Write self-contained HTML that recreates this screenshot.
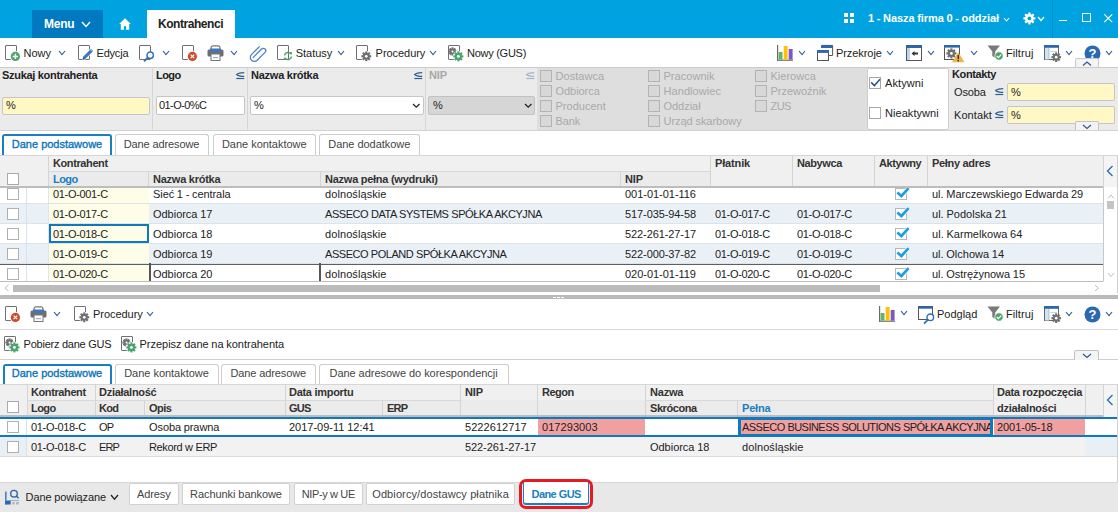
<!DOCTYPE html><html><head><meta charset="utf-8"><style>
html,body{margin:0;padding:0;width:1118px;height:512px;overflow:hidden;background:#fff;position:relative}
body{font-family:"Liberation Sans",sans-serif;font-size:11px;color:#222}
.t{position:absolute;white-space:nowrap;line-height:14px}
svg{overflow:visible;position:absolute}
</style></head><body>
<div style="position:absolute;left:0px;top:0px;width:1118px;height:38px;background:#00a3e0"></div>
<div style="position:absolute;left:32px;top:10px;width:71px;height:28px;background:#0079c1"></div>
<div class="t" style="left:44px;top:16.84px;font-size:12px;color:#fff;font-weight:bold;;letter-spacing:-0.223px;word-spacing:0.000px">Menu</div>
<svg style="position:absolute;left:81px;top:21.0px" width="10" height="6.5" viewBox="0 0 10 6.5"><polyline points="1,1 5.0,5.5 9,1" fill="none" stroke="#fff" stroke-width="1.4"/></svg>
<svg style="position:absolute;left:119px;top:18px" width="12" height="12" viewBox="0 0 12 12"><path d="M6 0.3 L11.8 6 L10.2 6 L10.2 11.8 L1.8 11.8 L1.8 6 L0.2 6 Z" fill="#fff"/><rect x="4.9" y="8.2" width="2.2" height="3.6" fill="#00a3e0"/></svg>
<div style="position:absolute;left:147px;top:10px;width:88px;height:28px;background:#fff"></div>
<div class="t" style="left:158px;top:16.84px;font-size:12px;color:#222;font-weight:bold;;letter-spacing:-0.452px;word-spacing:0.000px">Kontrahenci</div>
<svg style="position:absolute;left:844px;top:13px" width="10" height="10" viewBox="0 0 10 10"><rect x="0" y="0" width="4" height="4" fill="#fff"/><rect x="6" y="0" width="4" height="4" fill="#fff"/><rect x="0" y="6" width="4" height="4" fill="#fff"/><rect x="6" y="6" width="4" height="4" fill="#fff"/></svg>
<div class="t" style="left:868px;top:11.19px;font-size:11px;color:#fff;font-weight:bold;;letter-spacing:-0.077px;word-spacing:-0.251px">1 - Nasza firma 0 - oddział</div>
<svg style="position:absolute;left:1003px;top:16.5px" width="7" height="5" viewBox="0 0 7 5"><polyline points="1,1 3.5,4 6,1" fill="none" stroke="#fff" stroke-width="1.1"/></svg>
<svg style="position:absolute;left:1021.5999999999999px;top:10.6px" width="14.8" height="14.8" viewBox="0 0 14.8 14.8"><g transform="translate(7.4,7.4)"><rect x="-1.1" y="-6.0" width="2.2" height="12.0" transform="rotate(0)" fill="#fff"/><rect x="-1.1" y="-6.0" width="2.2" height="12.0" transform="rotate(45)" fill="#fff"/><rect x="-1.1" y="-6.0" width="2.2" height="12.0" transform="rotate(90)" fill="#fff"/><rect x="-1.1" y="-6.0" width="2.2" height="12.0" transform="rotate(135)" fill="#fff"/><circle r="4.4" fill="#fff"/><circle r="1.848" fill="#00a3e0"/></g></svg>
<svg style="position:absolute;left:1037px;top:15.5px" width="8" height="5.5" viewBox="0 0 8 5.5"><polyline points="1,1 4.0,4.5 7,1" fill="none" stroke="#fff" stroke-width="1.2"/></svg>
<div style="position:absolute;left:1052px;top:0px;width:1px;height:38px;background:#0a8cc4"></div>
<div style="position:absolute;left:1059px;top:19.6px;width:8px;height:1.4px;background:#fff"></div>
<div style="position:absolute;left:1082px;top:13px;width:8.5px;height:8.5px;box-sizing:border-box;border:1.2px solid #fff"></div>
<svg style="position:absolute;left:1104px;top:14px" width="9" height="9" viewBox="0 0 9 9"><path d="M0.3 0.3 L8.2 8.2 M8.2 0.3 L0.3 8.2" stroke="#fff" stroke-width="1.1"/></svg>
<div style="position:absolute;left:0px;top:67px;width:1118px;height:1px;background:#cbcbcb"></div>
<svg style="position:absolute;left:5px;top:45px" width="13" height="15" viewBox="0 0 13 15"><rect x="0.5" y="0.5" width="11" height="14" rx="0.5" fill="none" stroke="#707070" stroke-width="1"/></svg>
<svg style="position:absolute;left:8.900000000000002px;top:50.2px" width="12.799999999999999" height="12.799999999999999" viewBox="0 0 12.799999999999999 12.799999999999999"><circle cx="6.3999999999999995" cy="6.3999999999999995" r="5.5" fill="#fff"/><circle cx="6.3999999999999995" cy="6.3999999999999995" r="4.6" fill="#4aa36c"/><path d="M6.3999999999999995 3.6999999999999993 V9.1 M3.6999999999999993 6.3999999999999995 H9.1" stroke="#fff" stroke-width="1.5"/></svg>
<div class="t" style="left:23.5px;top:45.69px;font-size:11px;color:#222;font-weight:normal;;letter-spacing:0.023px;word-spacing:0.000px">Nowy</div>
<svg style="position:absolute;left:58px;top:50.0px" width="8" height="5.5" viewBox="0 0 8 5.5"><polyline points="1,1 4.0,4.5 7,1" fill="none" stroke="#2e5f91" stroke-width="1.15"/></svg>
<svg style="position:absolute;left:78px;top:45px" width="13" height="15" viewBox="0 0 13 15"><rect x="0.5" y="0.5" width="11" height="14" rx="0.5" fill="none" stroke="#707070" stroke-width="1"/></svg>
<svg style="position:absolute;left:81px;top:47px" width="13" height="14" viewBox="0 0 13 14"><path d="M1.5 12.8 L2.3 9.6 L10 1.9 L12.2 4.1 L4.5 11.8 Z" fill="#3b78c2" stroke="#fff" stroke-width="1.2" stroke-linejoin="round"/><path d="M1.5 12.8 L2.3 9.6 L10 1.9 L12.2 4.1 L4.5 11.8 Z" fill="#3b78c2"/><path d="M1.5 12.8 L2.1 10.5 L3.7 12.1 Z" fill="#24507f"/><path d="M10 1.9 L12.2 4.1 L11.4 4.9 L9.2 2.7 Z" fill="#9cc0ea"/></svg>
<div class="t" style="left:96.5px;top:45.69px;font-size:11px;color:#222;font-weight:normal;;letter-spacing:-0.195px;word-spacing:0.000px">Edycja</div>
<svg style="position:absolute;left:139px;top:45px" width="13" height="15" viewBox="0 0 13 15"><rect x="0.5" y="0.5" width="11" height="14" rx="0.5" fill="none" stroke="#707070" stroke-width="1"/></svg>
<svg style="position:absolute;left:142.60000000000002px;top:51.099999999999994px" width="12.4" height="12.4" viewBox="0 0 12.4 12.4"><circle cx="7.2" cy="4.2" r="3.2" fill="#fff" stroke="#2f6fba" stroke-width="1.4"/><line x1="4.960000000000001" y1="6.4399999999999995" x2="1" y2="10.4" stroke="#2f6fba" stroke-width="1.8"/></svg>
<svg style="position:absolute;left:161.5px;top:49.7px" width="8" height="5.5" viewBox="0 0 8 5.5"><polyline points="1,1 4.0,4.5 7,1" fill="none" stroke="#2e5f91" stroke-width="1.15"/></svg>
<svg style="position:absolute;left:182px;top:45px" width="13" height="15" viewBox="0 0 13 15"><rect x="0.5" y="0.5" width="11" height="14" rx="0.5" fill="none" stroke="#707070" stroke-width="1"/></svg>
<svg style="position:absolute;left:186.0px;top:50.0px" width="12.799999999999999" height="12.799999999999999" viewBox="0 0 12.799999999999999 12.799999999999999"><circle cx="6.3999999999999995" cy="6.3999999999999995" r="5.5" fill="#fff"/><circle cx="6.3999999999999995" cy="6.3999999999999995" r="4.6" fill="#d04a2a"/><path d="M4.6 4.6 L8.2 8.2 M8.2 4.6 L4.6 8.2" stroke="#fff" stroke-width="1.2"/></svg>
<svg style="position:absolute;left:207px;top:45px" width="17" height="16" viewBox="0 0 17 16"><rect x="4" y="0.8" width="9" height="5" rx="2" fill="none" stroke="#777" stroke-width="1.2"/><rect x="0.5" y="4.5" width="16" height="7" rx="1.5" fill="#6e6e6e"/><rect x="3" y="3.5" width="11" height="3.2" fill="#3b78c2"/><rect x="4" y="9" width="9" height="6.5" fill="#fff" stroke="#777" stroke-width="1"/><rect x="6" y="12" width="5" height="1.2" fill="#8fb0d8"/></svg>
<svg style="position:absolute;left:230px;top:50.0px" width="8" height="5.5" viewBox="0 0 8 5.5"><polyline points="1,1 4.0,4.5 7,1" fill="none" stroke="#2e5f91" stroke-width="1.15"/></svg>
<svg style="position:absolute;left:250px;top:45px" width="17" height="17" viewBox="0 0 17 17"><path d="M3.2 13.2 L11.8 4.6 A2.4 2.4 0 0 1 15.2 8 L7.4 15.8 A4 4 0 0 1 1.6 10.2 L9.6 2.2" fill="none" stroke="#4a86c8" stroke-width="1.3" stroke-linecap="round" transform="translate(-0.2,-0.6)"/></svg>
<svg style="position:absolute;left:277px;top:45px" width="13" height="15" viewBox="0 0 13 15"><rect x="0.5" y="0.5" width="11" height="14" rx="0.5" fill="none" stroke="#707070" stroke-width="1"/></svg>
<svg style="position:absolute;left:283.2px;top:50.8px" width="10" height="10" viewBox="0 0 10 10"><path d="M1.5 4.5 A3.6 3.6 0 0 1 8 3" fill="none" stroke="#4aa36c" stroke-width="1.5"/><path d="M8.5 5.5 A3.6 3.6 0 0 1 2 7" fill="none" stroke="#4aa36c" stroke-width="1.5"/><path d="M6.5 1 L9.2 1.2 L8.6 4 Z" fill="#4aa36c"/><path d="M3.5 9 L0.8 8.8 L1.4 6 Z" fill="#4aa36c"/></svg>
<div class="t" style="left:295.7px;top:45.69px;font-size:11px;color:#222;font-weight:normal;;letter-spacing:-0.011px;word-spacing:0.000px">Statusy</div>
<svg style="position:absolute;left:337px;top:50.0px" width="8" height="5.5" viewBox="0 0 8 5.5"><polyline points="1,1 4.0,4.5 7,1" fill="none" stroke="#2e5f91" stroke-width="1.15"/></svg>
<svg style="position:absolute;left:356px;top:45px" width="13" height="15" viewBox="0 0 13 15"><rect x="0.5" y="0.5" width="11" height="14" rx="0.5" fill="none" stroke="#707070" stroke-width="1"/></svg>
<svg style="position:absolute;left:360.2px;top:50.2px" width="12.6" height="12.6" viewBox="0 0 12.6 12.6"><g transform="translate(6.3,6.3)"><circle r="5.5" fill="#fff"/><rect x="-1.1" y="-4.9" width="2.2" height="9.8" transform="rotate(0)" fill="#6f6f6f"/><rect x="-1.1" y="-4.9" width="2.2" height="9.8" transform="rotate(45)" fill="#6f6f6f"/><rect x="-1.1" y="-4.9" width="2.2" height="9.8" transform="rotate(90)" fill="#6f6f6f"/><rect x="-1.1" y="-4.9" width="2.2" height="9.8" transform="rotate(135)" fill="#6f6f6f"/><circle r="3.3" fill="#6f6f6f"/><circle r="1.386" fill="#fff"/></g></svg>
<div class="t" style="left:375.6px;top:45.99px;font-size:11px;color:#222;font-weight:normal;;letter-spacing:-0.047px;word-spacing:0.000px">Procedury</div>
<svg style="position:absolute;left:429.3px;top:50.0px" width="8" height="5.5" viewBox="0 0 8 5.5"><polyline points="1,1 4.0,4.5 7,1" fill="none" stroke="#2e5f91" stroke-width="1.15"/></svg>
<svg style="position:absolute;left:448px;top:45px" width="13" height="15" viewBox="0 0 13 15"><rect x="0.5" y="0.5" width="11" height="14" rx="0.5" fill="none" stroke="#707070" stroke-width="1"/></svg>
<svg style="position:absolute;left:447.0px;top:45.7px" width="11.0" height="11.0" viewBox="0 0 11.0 11.0"><g transform="translate(5.5,5.5)"><rect x="-1.1" y="-4.1" width="2.2" height="8.2" transform="rotate(0)" fill="#6f6f6f"/><rect x="-1.1" y="-4.1" width="2.2" height="8.2" transform="rotate(45)" fill="#6f6f6f"/><rect x="-1.1" y="-4.1" width="2.2" height="8.2" transform="rotate(90)" fill="#6f6f6f"/><rect x="-1.1" y="-4.1" width="2.2" height="8.2" transform="rotate(135)" fill="#6f6f6f"/><circle r="2.5" fill="#6f6f6f"/><circle r="1.05" fill="#fff"/></g></svg>
<svg style="position:absolute;left:451.90000000000003px;top:49.7px" width="12.8" height="12.8" viewBox="0 0 12.8 12.8"><g transform="translate(6.4,6.4)"><circle r="5.6" fill="#fff"/><rect x="-1.1" y="-5.0" width="2.2" height="10.0" transform="rotate(0)" fill="#4aa36c"/><rect x="-1.1" y="-5.0" width="2.2" height="10.0" transform="rotate(45)" fill="#4aa36c"/><rect x="-1.1" y="-5.0" width="2.2" height="10.0" transform="rotate(90)" fill="#4aa36c"/><rect x="-1.1" y="-5.0" width="2.2" height="10.0" transform="rotate(135)" fill="#4aa36c"/><circle r="3.4" fill="#4aa36c"/><circle r="1.428" fill="#fff"/></g></svg>
<div class="t" style="left:467px;top:45.69px;font-size:11px;color:#222;font-weight:normal;;letter-spacing:-0.255px;word-spacing:-0.073px">Nowy (GUS)</div>
<svg style="position:absolute;left:777px;top:45px" width="17" height="16" viewBox="0 0 17 16"><rect x="0" y="0" width="1.2" height="15.6" fill="#6b6b6b"/><rect x="0" y="14.6" width="16" height="1.2" fill="#6b6b6b"/><rect x="1.6" y="7" width="3.9" height="7.6" fill="#62b36b"/><rect x="6.7" y="1" width="3.9" height="13.6" fill="#ffc107"/><rect x="11.7" y="4" width="3.9" height="10.6" fill="#7b57c4"/></svg>
<svg style="position:absolute;left:797.5px;top:50.0px" width="8" height="5.5" viewBox="0 0 8 5.5"><polyline points="1,1 4.0,4.5 7,1" fill="none" stroke="#2e5f91" stroke-width="1.15"/></svg>
<svg style="position:absolute;left:817px;top:45px" width="17" height="17" viewBox="0 0 17 17"><path d="M4.6 2.6 V0.4 H15.6 V10.5 H11.6" fill="none" stroke="#555" stroke-width="1"/><rect x="4.1" y="0.2" width="11.5" height="2.8" fill="#2a68b0"/><rect x="0.5" y="5.5" width="11" height="10" fill="#fff" stroke="#555" stroke-width="1"/><rect x="0" y="5" width="12" height="2.9" fill="#2a68b0"/></svg>
<div class="t" style="left:836px;top:45.69px;font-size:11px;color:#222;font-weight:normal;;letter-spacing:-0.073px;word-spacing:0.000px">Przekroje</div>
<svg style="position:absolute;left:886px;top:50.0px" width="8" height="5.5" viewBox="0 0 8 5.5"><polyline points="1,1 4.0,4.5 7,1" fill="none" stroke="#2e5f91" stroke-width="1.15"/></svg>
<svg style="position:absolute;left:906px;top:45px" width="16" height="16" viewBox="0 0 16 16"><rect x="0.5" y="0.5" width="15" height="15" fill="#fff" stroke="#555" stroke-width="1"/><rect x="0.5" y="0.5" width="15" height="2.5" fill="#2a68b0"/><rect x="1" y="3" width="3" height="12" fill="#bcd6ee"/><path d="M5.5 8.5 L8.5 6 V7.6 H12 V9.4 H8.5 V11 Z" fill="#333"/></svg>
<svg style="position:absolute;left:926.5px;top:49.7px" width="8" height="5.5" viewBox="0 0 8 5.5"><polyline points="1,1 4.0,4.5 7,1" fill="none" stroke="#2e5f91" stroke-width="1.15"/></svg>
<svg style="position:absolute;left:944px;top:45px" width="17" height="15" viewBox="0 0 17 15"><rect x="0.5" y="0.5" width="15" height="14" fill="#fff" stroke="#555" stroke-width="1"/><rect x="0" y="0" width="16" height="2.6" fill="#2a68b0"/></svg>
<svg style="position:absolute;left:945.0px;top:47.1px" width="12.8" height="12.8" viewBox="0 0 12.8 12.8"><g transform="translate(6.4,6.4)"><rect x="-1.1" y="-5.0" width="2.2" height="10.0" transform="rotate(0)" fill="#6f6f6f"/><rect x="-1.1" y="-5.0" width="2.2" height="10.0" transform="rotate(45)" fill="#6f6f6f"/><rect x="-1.1" y="-5.0" width="2.2" height="10.0" transform="rotate(90)" fill="#6f6f6f"/><rect x="-1.1" y="-5.0" width="2.2" height="10.0" transform="rotate(135)" fill="#6f6f6f"/><circle r="3.4" fill="#6f6f6f"/><circle r="1.428" fill="#fff"/></g></svg>
<svg style="position:absolute;left:951.5px;top:52px" width="13" height="10.5" viewBox="0 0 13 10.5"><path d="M6.2 0.3 L12.6 10.2 H0 Z" fill="#f0b448"/><rect x="5.6" y="3" width="1.3" height="4.3" fill="#222"/><rect x="5.6" y="8" width="1.3" height="1.4" fill="#222"/></svg>
<svg style="position:absolute;left:969.5px;top:49.7px" width="8" height="5.5" viewBox="0 0 8 5.5"><polyline points="1,1 4.0,4.5 7,1" fill="none" stroke="#2e5f91" stroke-width="1.15"/></svg>
<svg style="position:absolute;left:987px;top:45px" width="17" height="16" viewBox="0 0 17 16"><path d="M0.5 0.5 H13 L8.2 6.5 V13 L5.3 11 V6.5 Z" fill="#7a7a7a"/><circle cx="12" cy="11" r="4.2" fill="#4aa36c" stroke="#fff" stroke-width="0.8"/><path d="M9.8 11 L11.4 12.6 L14.2 9.6" fill="none" stroke="#fff" stroke-width="1.3"/></svg>
<div class="t" style="left:1006px;top:45.69px;font-size:11px;color:#222;font-weight:normal;;letter-spacing:0.080px;word-spacing:0.000px">Filtruj</div>
<svg style="position:absolute;left:1044px;top:45px" width="15" height="15" viewBox="0 0 15 15"><rect x="0.5" y="0.5" width="14" height="14" fill="#fff" stroke="#666" stroke-width="1"/><rect x="1" y="3" width="4" height="11.5" fill="#cfe3f5"/><line x1="5" y1="3" x2="5" y2="14.5" stroke="#8aa" stroke-width="0.6"/><line x1="6.5" y1="6.5" x2="13" y2="6.5" stroke="#bbb" stroke-width="0.7"/><rect x="0" y="0" width="15" height="2.8" fill="#2a68b0"/></svg>
<svg style="position:absolute;left:1049.8px;top:50.8px" width="12.4" height="12.4" viewBox="0 0 12.4 12.4"><g transform="translate(6.2,6.2)"><rect x="-1.1" y="-4.800000000000001" width="2.2" height="9.600000000000001" transform="rotate(0)" fill="#6f6f6f"/><rect x="-1.1" y="-4.800000000000001" width="2.2" height="9.600000000000001" transform="rotate(45)" fill="#6f6f6f"/><rect x="-1.1" y="-4.800000000000001" width="2.2" height="9.600000000000001" transform="rotate(90)" fill="#6f6f6f"/><rect x="-1.1" y="-4.800000000000001" width="2.2" height="9.600000000000001" transform="rotate(135)" fill="#6f6f6f"/><circle r="3.2" fill="#6f6f6f"/><circle r="1.344" fill="#fff"/></g></svg>
<svg style="position:absolute;left:1064.5px;top:50.0px" width="8" height="5.5" viewBox="0 0 8 5.5"><polyline points="1,1 4.0,4.5 7,1" fill="none" stroke="#2e5f91" stroke-width="1.15"/></svg>
<svg style="position:absolute;left:1083.7px;top:44.6px" width="17" height="17" viewBox="0 0 17 17"><circle cx="8.5" cy="8.5" r="8" fill="#2a68b0"/><text x="8.5" y="13.2" text-anchor="middle" font-family="Liberation Sans" font-weight="bold" font-size="13" fill="#fff">?</text></svg>
<svg style="position:absolute;left:1104.5px;top:50.0px" width="8" height="5.5" viewBox="0 0 8 5.5"><polyline points="1,1 4.0,4.5 7,1" fill="none" stroke="#2e5f91" stroke-width="1.15"/></svg>
<div style="position:absolute;left:0px;top:68px;width:1118px;height:62px;background:#ebebeb"></div>
<div style="position:absolute;left:0px;top:130px;width:1118px;height:1px;background:#d2d2d2"></div>
<div style="position:absolute;left:152px;top:68px;width:1px;height:62px;background:#d6d6d6"></div>
<div style="position:absolute;left:247px;top:68px;width:1px;height:62px;background:#d6d6d6"></div>
<div style="position:absolute;left:425px;top:68px;width:1px;height:62px;background:#d6d6d6"></div>
<div class="t" style="left:2px;top:68.19px;font-size:11px;color:#222;font-weight:bold;;letter-spacing:-0.301px;word-spacing:-0.027px">Szukaj kontrahenta</div>
<div style="position:absolute;left:1.5px;top:97px;width:148px;height:18px;box-sizing:border-box;border:1px solid #c6c6c6;border-radius:2px;background:#fff7c4"></div>
<div class="t" style="left:6px;top:98.19px;font-size:11px;color:#222;font-weight:normal;;letter-spacing:-1.719px;word-spacing:0.000px">%</div>
<div class="t" style="left:156px;top:68.19px;font-size:11px;color:#222;font-weight:bold;;letter-spacing:-0.559px;word-spacing:0.000px">Logo</div>
<svg style="position:absolute;left:236px;top:71.5px" width="9" height="8" viewBox="0 0 9 8"><path d="M8.2 0.6 C4 0.6 1.6 1.6 0.6 2.5 C1.6 3.4 4 4.4 8.2 4.4" fill="none" stroke="#2e5f91" stroke-width="1.1"/><line x1="0.3" y1="6.5" x2="8.3" y2="6.5" stroke="#2e5f91" stroke-width="1.2"/></svg>
<div style="position:absolute;left:155.5px;top:96px;width:89px;height:19px;box-sizing:border-box;border:1px solid #c6c6c6;border-radius:2px;background:#fff"></div>
<div class="t" style="left:159px;top:98.19px;font-size:11px;color:#222;font-weight:normal;;letter-spacing:-0.566px;word-spacing:0.000px">01-O-0%C</div>
<div class="t" style="left:251px;top:68.19px;font-size:11px;color:#222;font-weight:bold;;letter-spacing:-0.240px;word-spacing:-0.088px">Nazwa krótka</div>
<svg style="position:absolute;left:414px;top:71.5px" width="9" height="8" viewBox="0 0 9 8"><path d="M8.2 0.6 C4 0.6 1.6 1.6 0.6 2.5 C1.6 3.4 4 4.4 8.2 4.4" fill="none" stroke="#2e5f91" stroke-width="1.1"/><line x1="0.3" y1="6.5" x2="8.3" y2="6.5" stroke="#2e5f91" stroke-width="1.2"/></svg>
<div style="position:absolute;left:250px;top:96px;width:174px;height:19px;box-sizing:border-box;border:1px solid #c6c6c6;border-radius:2px;background:#fff"></div>
<div class="t" style="left:254px;top:98.19px;font-size:11px;color:#222;font-weight:normal;;letter-spacing:-1.719px;word-spacing:0.000px">%</div>
<svg style="position:absolute;left:412.3px;top:103.1px" width="8.5" height="5.2" viewBox="0 0 8.5 5.2"><polyline points="1,1 4.25,4.2 7.5,1" fill="none" stroke="#222" stroke-width="1.3"/></svg>
<div class="t" style="left:429px;top:68.19px;font-size:11px;color:#a8a8a8;font-weight:bold;;letter-spacing:-0.089px;word-spacing:0.000px">NIP</div>
<svg style="position:absolute;left:526px;top:71.5px" width="9" height="8" viewBox="0 0 9 8"><path d="M8.2 0.6 C4 0.6 1.6 1.6 0.6 2.5 C1.6 3.4 4 4.4 8.2 4.4" fill="none" stroke="#9fb6cf" stroke-width="1.1"/><line x1="0.3" y1="6.5" x2="8.3" y2="6.5" stroke="#9fb6cf" stroke-width="1.2"/></svg>
<div style="position:absolute;left:428px;top:96px;width:107px;height:19px;box-sizing:border-box;border:1px solid #c2c2c2;border-radius:2px;background:#d6d6d6"></div>
<div class="t" style="left:433px;top:98.19px;font-size:11px;color:#222;font-weight:normal;;letter-spacing:-1.719px;word-spacing:0.000px">%</div>
<svg style="position:absolute;left:523.5px;top:103.3px" width="8.5" height="5.2" viewBox="0 0 8.5 5.2"><polyline points="1,1 4.25,4.2 7.5,1" fill="none" stroke="#222" stroke-width="1.3"/></svg>
<div style="position:absolute;left:537px;top:68px;width:330px;height:62px;background:#dedede"></div>
<div style="position:absolute;left:539.8px;top:70.1px;width:12px;height:12px;box-sizing:border-box;border:1px solid #b3b3b3;background:#d8d8d8"></div>
<div class="t" style="left:555.5px;top:69.19px;font-size:11px;color:#a9a9a9;font-weight:normal;;letter-spacing:0.057px;word-spacing:0.000px">Dostawca</div>
<div style="position:absolute;left:539.8px;top:85.1px;width:12px;height:12px;box-sizing:border-box;border:1px solid #b3b3b3;background:#d8d8d8"></div>
<div class="t" style="left:555.5px;top:84.19px;font-size:11px;color:#a9a9a9;font-weight:normal;;letter-spacing:-0.049px;word-spacing:0.000px">Odbiorca</div>
<div style="position:absolute;left:539.8px;top:100.1px;width:12px;height:12px;box-sizing:border-box;border:1px solid #b3b3b3;background:#d8d8d8"></div>
<div class="t" style="left:555.5px;top:99.19px;font-size:11px;color:#a9a9a9;font-weight:normal;;letter-spacing:0.021px;word-spacing:0.000px">Producent</div>
<div style="position:absolute;left:539.8px;top:115.1px;width:12px;height:12px;box-sizing:border-box;border:1px solid #b3b3b3;background:#d8d8d8"></div>
<div class="t" style="left:555.5px;top:114.19px;font-size:11px;color:#a9a9a9;font-weight:normal;;letter-spacing:-0.148px;word-spacing:0.000px">Bank</div>
<div style="position:absolute;left:647.8px;top:70.1px;width:12px;height:12px;box-sizing:border-box;border:1px solid #b3b3b3;background:#d8d8d8"></div>
<div class="t" style="left:663.5px;top:69.19px;font-size:11px;color:#a9a9a9;font-weight:normal;;letter-spacing:0.036px;word-spacing:0.000px">Pracownik</div>
<div style="position:absolute;left:647.8px;top:85.1px;width:12px;height:12px;box-sizing:border-box;border:1px solid #b3b3b3;background:#d8d8d8"></div>
<div class="t" style="left:663.5px;top:84.19px;font-size:11px;color:#a9a9a9;font-weight:normal;;letter-spacing:0.072px;word-spacing:0.000px">Handlowiec</div>
<div style="position:absolute;left:647.8px;top:100.1px;width:12px;height:12px;box-sizing:border-box;border:1px solid #b3b3b3;background:#d8d8d8"></div>
<div class="t" style="left:663.5px;top:99.19px;font-size:11px;color:#a9a9a9;font-weight:normal;;letter-spacing:-0.038px;word-spacing:0.000px">Oddział</div>
<div style="position:absolute;left:647.8px;top:115.1px;width:12px;height:12px;box-sizing:border-box;border:1px solid #b3b3b3;background:#d8d8d8"></div>
<div class="t" style="left:663.5px;top:114.19px;font-size:11px;color:#a9a9a9;font-weight:normal;;letter-spacing:-0.031px;word-spacing:-0.297px">Urząd skarbowy</div>
<div style="position:absolute;left:754.8px;top:70.1px;width:12px;height:12px;box-sizing:border-box;border:1px solid #b3b3b3;background:#d8d8d8"></div>
<div class="t" style="left:770.5px;top:69.19px;font-size:11px;color:#a9a9a9;font-weight:normal;;letter-spacing:0.010px;word-spacing:0.000px">Kierowca</div>
<div style="position:absolute;left:754.8px;top:85.1px;width:12px;height:12px;box-sizing:border-box;border:1px solid #b3b3b3;background:#d8d8d8"></div>
<div class="t" style="left:770.5px;top:84.19px;font-size:11px;color:#a9a9a9;font-weight:normal;;letter-spacing:-0.013px;word-spacing:0.000px">Przewoźnik</div>
<div style="position:absolute;left:754.8px;top:100.1px;width:12px;height:12px;box-sizing:border-box;border:1px solid #b3b3b3;background:#d8d8d8"></div>
<div class="t" style="left:770.5px;top:99.19px;font-size:11px;color:#a9a9a9;font-weight:normal;;letter-spacing:-0.578px;word-spacing:0.000px">ZUS</div>
<div style="position:absolute;left:867px;top:68px;width:82px;height:62px;box-sizing:border-box;border:1px solid #cfcfcf;background:#fff;border-radius:2px"></div>
<div style="position:absolute;left:869px;top:77.2px;width:12px;height:12px;box-sizing:border-box;border:1px solid #a6a6a6;background:#fff"></div>
<svg style="position:absolute;left:869px;top:77px" width="12" height="12" viewBox="0 0 12 12"><polyline points="2.2,5.4 5.4,8.6 11,2.2" fill="none" stroke="#24528a" stroke-width="1.5"/></svg>
<div class="t" style="left:885px;top:75.99px;font-size:11px;color:#222;font-weight:normal;;letter-spacing:0.094px;word-spacing:0.000px">Aktywni</div>
<div style="position:absolute;left:869px;top:107px;width:12px;height:12px;box-sizing:border-box;border:1px solid #a6a6a6;background:#fff"></div>
<div class="t" style="left:885px;top:106.19px;font-size:11px;color:#222;font-weight:normal;;letter-spacing:0.053px;word-spacing:0.000px">Nieaktywni</div>
<div class="t" style="left:952px;top:67.19px;font-size:11px;color:#222;font-weight:bold;;letter-spacing:-0.387px;word-spacing:0.000px">Kontakty</div>
<div class="t" style="left:954px;top:85.19px;font-size:11px;color:#222;font-weight:normal;;letter-spacing:-0.153px;word-spacing:0.000px">Osoba</div>
<svg style="position:absolute;left:995px;top:88px" width="9" height="8" viewBox="0 0 9 8"><path d="M8.2 0.6 C4 0.6 1.6 1.6 0.6 2.5 C1.6 3.4 4 4.4 8.2 4.4" fill="none" stroke="#2e5f91" stroke-width="1.1"/><line x1="0.3" y1="6.5" x2="8.3" y2="6.5" stroke="#2e5f91" stroke-width="1.2"/></svg>
<div style="position:absolute;left:1007px;top:83px;width:108px;height:18px;box-sizing:border-box;border:1px solid #c6c6c6;border-radius:2px;background:#fff7c4"></div>
<div class="t" style="left:1011px;top:85.19px;font-size:11px;color:#222;font-weight:normal;;letter-spacing:-1.719px;word-spacing:0.000px">%</div>
<div class="t" style="left:954px;top:107.69px;font-size:11px;color:#222;font-weight:normal;;letter-spacing:0.076px;word-spacing:0.000px">Kontakt</div>
<svg style="position:absolute;left:995px;top:110.5px" width="9" height="8" viewBox="0 0 9 8"><path d="M8.2 0.6 C4 0.6 1.6 1.6 0.6 2.5 C1.6 3.4 4 4.4 8.2 4.4" fill="none" stroke="#2e5f91" stroke-width="1.1"/><line x1="0.3" y1="6.5" x2="8.3" y2="6.5" stroke="#2e5f91" stroke-width="1.2"/></svg>
<div style="position:absolute;left:1007px;top:105.5px;width:108px;height:18px;box-sizing:border-box;border:1px solid #c6c6c6;border-radius:2px;background:#fff7c4"></div>
<div class="t" style="left:1011px;top:107.69px;font-size:11px;color:#222;font-weight:normal;;letter-spacing:-1.719px;word-spacing:0.000px">%</div>
<div style="position:absolute;left:1074.5px;top:58.2px;width:24px;height:9px;box-sizing:border-box;border:1px solid #c9c9c9;border-bottom:none;background:#f4f4f4;border-radius:2px 2px 0 0"></div>
<svg style="position:absolute;left:1082px;top:60.8px" width="10" height="5" viewBox="0 0 10 5"><polyline points="1,4.5 5,1 9,4.5" fill="none" stroke="#2e5f91" stroke-width="1.3"/></svg>
<div style="position:absolute;left:1074.5px;top:121.2px;width:24px;height:9.3px;box-sizing:border-box;border:1px solid #c2c2c2;border-bottom:none;background:#f4f4f4;border-radius:2px 2px 0 0"></div>
<svg style="position:absolute;left:1081.8px;top:124px" width="10" height="5" viewBox="0 0 10 5"><polyline points="1,1 5,4.5 9,1" fill="none" stroke="#2e5f91" stroke-width="1.3"/></svg>
<div style="position:absolute;left:2px;top:134px;width:110px;height:23px;box-sizing:border-box;border:2px solid #1a7fc1;border-bottom:none;border-radius:3px 3px 0 0;background:#fff"></div>
<div class="t" style="left:2px;top:137.00px;width:110px;text-align:center;color:#0b74b9;font-size:11px;-webkit-text-stroke:0.35px #0b74b9;letter-spacing:-0.011px;text-indent:0.011px">Dane podstawowe</div>
<div style="position:absolute;left:114.5px;top:134px;width:94px;height:22px;box-sizing:border-box;border:1px solid #cdcdcd;border-bottom:none;border-radius:3px 3px 0 0;background:#fff"></div>
<div class="t" style="left:114.5px;top:137.00px;width:94px;text-align:center;color:#444;font-size:11px;letter-spacing:-0.120px;text-indent:0.120px">Dane adresowe</div>
<div style="position:absolute;left:212.5px;top:134px;width:103.5px;height:22px;box-sizing:border-box;border:1px solid #cdcdcd;border-bottom:none;border-radius:3px 3px 0 0;background:#fff"></div>
<div class="t" style="left:212.5px;top:137.00px;width:103.5px;text-align:center;color:#444;font-size:11px;letter-spacing:-0.018px;text-indent:0.018px">Dane kontaktowe</div>
<div style="position:absolute;left:319px;top:134px;width:100.5px;height:22px;box-sizing:border-box;border:1px solid #cdcdcd;border-bottom:none;border-radius:3px 3px 0 0;background:#fff"></div>
<div class="t" style="left:319px;top:137.00px;width:100.5px;text-align:center;color:#444;font-size:11px;letter-spacing:-0.040px;text-indent:0.040px">Dane dodatkowe</div>
<div style="position:absolute;left:0px;top:156px;width:1103px;height:31px;background:#f0f0f0"></div>
<div style="position:absolute;left:48px;top:171px;width:662px;height:16px;background:#ebebeb"></div>
<div style="position:absolute;left:0px;top:186px;width:1103px;height:2px;background:#bdbdbd"></div>
<div style="position:absolute;left:48px;top:156px;width:1px;height:30px;background:#d4d4d4"></div>
<div style="position:absolute;left:48px;top:171px;width:662px;height:1px;background:#d9d9d9"></div>
<div style="position:absolute;left:148px;top:171px;width:1px;height:15px;background:#d4d4d4"></div>
<div style="position:absolute;left:320px;top:171px;width:1px;height:15px;background:#d4d4d4"></div>
<div style="position:absolute;left:620px;top:171px;width:1px;height:15px;background:#d4d4d4"></div>
<div style="position:absolute;left:710px;top:156px;width:1px;height:30px;background:#d4d4d4"></div>
<div style="position:absolute;left:792px;top:156px;width:1px;height:30px;background:#d4d4d4"></div>
<div style="position:absolute;left:874px;top:156px;width:1px;height:30px;background:#d4d4d4"></div>
<div style="position:absolute;left:927px;top:156px;width:1px;height:30px;background:#d4d4d4"></div>
<div style="position:absolute;left:0px;top:155px;width:1118px;height:1px;background:#d6d6d6"></div>
<div style="position:absolute;left:1103px;top:156px;width:15px;height:31px;background:#f4f4f4;box-sizing:border-box;border-left:1px solid #d4d4d4"></div>
<svg style="position:absolute;left:1106px;top:165px" width="8" height="12" viewBox="0 0 8 12"><polyline points="6.5,1 1.5,6 6.5,11" fill="none" stroke="#2a68b0" stroke-width="1.3"/></svg>
<div style="position:absolute;left:7px;top:173px;width:12px;height:12px;box-sizing:border-box;border:1px solid #aaa;background:#fff"></div>
<div class="t" style="left:53px;top:156.19px;font-size:11px;color:#333;font-weight:bold;;letter-spacing:-0.398px;word-spacing:0.000px">Kontrahent</div>
<div class="t" style="left:53px;top:172.19px;font-size:11px;color:#1a7fc1;font-weight:bold;;letter-spacing:-0.559px;word-spacing:0.000px">Logo</div>
<div class="t" style="left:153px;top:172.19px;font-size:11px;color:#333;font-weight:bold;;letter-spacing:-0.240px;word-spacing:-0.088px">Nazwa krótka</div>
<div class="t" style="left:325px;top:172.19px;font-size:11px;color:#333;font-weight:bold;;letter-spacing:-0.248px;word-spacing:-0.080px">Nazwa pełna (wydruki)</div>
<div class="t" style="left:625px;top:172.19px;font-size:11px;color:#333;font-weight:bold;;letter-spacing:-0.089px;word-spacing:0.000px">NIP</div>
<div class="t" style="left:715px;top:156.19px;font-size:11px;color:#333;font-weight:bold;;letter-spacing:-0.152px;word-spacing:0.000px">Płatnik</div>
<div class="t" style="left:797px;top:156.19px;font-size:11px;color:#333;font-weight:bold;;letter-spacing:-0.386px;word-spacing:0.000px">Nabywca</div>
<div class="t" style="left:879px;top:156.19px;font-size:11px;color:#333;font-weight:bold;;letter-spacing:-0.422px;word-spacing:0.000px">Aktywny</div>
<div class="t" style="left:932px;top:156.19px;font-size:11px;color:#333;font-weight:bold;;letter-spacing:-0.311px;word-spacing:-0.017px">Pełny adres</div>
<div style="position:absolute;left:0;top:188px;width:1103px;height:93px;overflow:hidden">
<div style="position:absolute;left:0px;top:-5px;width:1103px;height:20px;background:#fff"></div>
<div style="position:absolute;left:49px;top:-5px;width:100px;height:20px;background:#fdfde8"></div>
<div style="position:absolute;left:0px;top:-5px;width:1103px;height:1px;background:#dce3e9"></div>
<div style="position:absolute;left:26px;top:-5px;width:1px;height:20px;background:#d3e3f2"></div>
<div style="position:absolute;left:48px;top:-5px;width:1px;height:20px;background:#dde6ee"></div>
<div style="position:absolute;left:7px;top:0px;width:12px;height:12px;box-sizing:border-box;border:1px solid #b0b0b0;background:#fff"></div>
<div class="t" style="left:53px;top:-1.31px;font-size:11px;color:#222;font-weight:normal;;letter-spacing:-0.330px;word-spacing:0.000px">01-O-001-C</div>
<div class="t" style="left:153px;top:-1.31px;font-size:11px;color:#222;font-weight:normal;;letter-spacing:-0.064px;word-spacing:-0.265px">Sieć 1 - centrala</div>
<div class="t" style="left:325px;top:-1.31px;font-size:11px;color:#222;font-weight:normal;;letter-spacing:0.086px;word-spacing:0.000px">dolnośląskie</div>
<div class="t" style="left:625px;top:-1.31px;font-size:11px;color:#222;font-weight:normal;;letter-spacing:-0.030px;word-spacing:0.000px">001-01-01-116</div>
<div class="t" style="left:715px;top:-1.31px;font-size:11px;color:#222;font-weight:normal;;letter-spacing:0.000px;word-spacing:0.000px"></div>
<div class="t" style="left:797px;top:-1.31px;font-size:11px;color:#222;font-weight:normal;;letter-spacing:0.000px;word-spacing:0.000px"></div>
<div class="t" style="left:932px;top:-1.31px;font-size:11px;color:#222;font-weight:normal;;letter-spacing:-0.002px;word-spacing:-0.326px">ul. Marczewskiego Edwarda 29</div>
<div style="position:absolute;left:895px;top:0px;width:12px;height:12px;box-sizing:border-box;border:1px solid #b8b8b8;background:#fff"></div>
<svg style="position:absolute;left:885px;top:-5px" width="30" height="20" viewBox="0 0 30 20"><path d="M12.3 9.4 L16.4 13 L23.6 5.2" fill="none" stroke="#fff" stroke-width="4"/><path d="M12.3 9.4 L16.4 13 L23.6 5.2" fill="none" stroke="#1a9fe2" stroke-width="2.7"/></svg>
<div style="position:absolute;left:0px;top:15px;width:1103px;height:20px;background:#eaf1f6"></div>
<div style="position:absolute;left:49px;top:15px;width:100px;height:20px;background:#fdfde8"></div>
<div style="position:absolute;left:0px;top:15px;width:1103px;height:1px;background:#dce3e9"></div>
<div style="position:absolute;left:26px;top:15px;width:1px;height:20px;background:#d3e3f2"></div>
<div style="position:absolute;left:48px;top:15px;width:1px;height:20px;background:#dde6ee"></div>
<div style="position:absolute;left:7px;top:20px;width:12px;height:12px;box-sizing:border-box;border:1px solid #b0b0b0;background:#fff"></div>
<div class="t" style="left:53px;top:18.69px;font-size:11px;color:#222;font-weight:normal;;letter-spacing:-0.330px;word-spacing:0.000px">01-O-017-C</div>
<div class="t" style="left:153px;top:18.69px;font-size:11px;color:#222;font-weight:normal;;letter-spacing:-0.027px;word-spacing:-0.302px">Odbiorca 17</div>
<div class="t" style="left:325px;top:18.69px;font-size:11px;color:#222;font-weight:normal;;letter-spacing:-0.439px;word-spacing:0.110px">ASSECO DATA SYSTEMS SPÓŁKA AKCYJNA</div>
<div class="t" style="left:625px;top:18.69px;font-size:11px;color:#222;font-weight:normal;;letter-spacing:-0.093px;word-spacing:0.000px">517-035-94-58</div>
<div class="t" style="left:715px;top:18.69px;font-size:11px;color:#222;font-weight:normal;;letter-spacing:-0.330px;word-spacing:0.000px">01-O-017-C</div>
<div class="t" style="left:797px;top:18.69px;font-size:11px;color:#222;font-weight:normal;;letter-spacing:-0.330px;word-spacing:0.000px">01-O-017-C</div>
<div class="t" style="left:932px;top:18.69px;font-size:11px;color:#222;font-weight:normal;;letter-spacing:0.031px;word-spacing:-0.359px">ul. Podolska 21</div>
<div style="position:absolute;left:895px;top:20px;width:12px;height:12px;box-sizing:border-box;border:1px solid #b8b8b8;background:#fff"></div>
<svg style="position:absolute;left:885px;top:15px" width="30" height="20" viewBox="0 0 30 20"><path d="M12.3 9.4 L16.4 13 L23.6 5.2" fill="none" stroke="#fff" stroke-width="4"/><path d="M12.3 9.4 L16.4 13 L23.6 5.2" fill="none" stroke="#1a9fe2" stroke-width="2.7"/></svg>
<div style="position:absolute;left:0px;top:35px;width:1103px;height:20px;background:#fff"></div>
<div style="position:absolute;left:49px;top:35px;width:100px;height:20px;background:#fdfde8"></div>
<div style="position:absolute;left:0px;top:35px;width:1103px;height:1px;background:#dce3e9"></div>
<div style="position:absolute;left:26px;top:35px;width:1px;height:20px;background:#d3e3f2"></div>
<div style="position:absolute;left:48px;top:35px;width:1px;height:20px;background:#dde6ee"></div>
<div style="position:absolute;left:7px;top:40px;width:12px;height:12px;box-sizing:border-box;border:1px solid #b0b0b0;background:#fff"></div>
<div class="t" style="left:53px;top:38.69px;font-size:11px;color:#222;font-weight:normal;;letter-spacing:-0.330px;word-spacing:0.000px">01-O-018-C</div>
<div class="t" style="left:153px;top:38.69px;font-size:11px;color:#222;font-weight:normal;;letter-spacing:-0.027px;word-spacing:-0.302px">Odbiorca 18</div>
<div class="t" style="left:325px;top:38.69px;font-size:11px;color:#222;font-weight:normal;;letter-spacing:0.086px;word-spacing:0.000px">dolnośląskie</div>
<div class="t" style="left:625px;top:38.69px;font-size:11px;color:#222;font-weight:normal;;letter-spacing:-0.093px;word-spacing:0.000px">522-261-27-17</div>
<div class="t" style="left:715px;top:38.69px;font-size:11px;color:#222;font-weight:normal;;letter-spacing:-0.330px;word-spacing:0.000px">01-O-018-C</div>
<div class="t" style="left:797px;top:38.69px;font-size:11px;color:#222;font-weight:normal;;letter-spacing:-0.330px;word-spacing:0.000px">01-O-018-C</div>
<div class="t" style="left:932px;top:38.69px;font-size:11px;color:#222;font-weight:normal;;letter-spacing:0.032px;word-spacing:-0.360px">ul. Karmelkowa 64</div>
<div style="position:absolute;left:895px;top:40px;width:12px;height:12px;box-sizing:border-box;border:1px solid #b8b8b8;background:#fff"></div>
<svg style="position:absolute;left:885px;top:35px" width="30" height="20" viewBox="0 0 30 20"><path d="M12.3 9.4 L16.4 13 L23.6 5.2" fill="none" stroke="#fff" stroke-width="4"/><path d="M12.3 9.4 L16.4 13 L23.6 5.2" fill="none" stroke="#1a9fe2" stroke-width="2.7"/></svg>
<div style="position:absolute;left:0px;top:55px;width:1103px;height:20px;background:#eaf1f6"></div>
<div style="position:absolute;left:49px;top:55px;width:100px;height:20px;background:#fdfde8"></div>
<div style="position:absolute;left:0px;top:55px;width:1103px;height:1px;background:#dce3e9"></div>
<div style="position:absolute;left:26px;top:55px;width:1px;height:20px;background:#d3e3f2"></div>
<div style="position:absolute;left:48px;top:55px;width:1px;height:20px;background:#dde6ee"></div>
<div style="position:absolute;left:7px;top:60px;width:12px;height:12px;box-sizing:border-box;border:1px solid #b0b0b0;background:#fff"></div>
<div class="t" style="left:53px;top:58.69px;font-size:11px;color:#222;font-weight:normal;;letter-spacing:-0.330px;word-spacing:0.000px">01-O-019-C</div>
<div class="t" style="left:153px;top:58.69px;font-size:11px;color:#222;font-weight:normal;;letter-spacing:-0.027px;word-spacing:-0.302px">Odbiorca 19</div>
<div class="t" style="left:325px;top:58.69px;font-size:11px;color:#222;font-weight:normal;;letter-spacing:-0.456px;word-spacing:0.128px">ASSECO POLAND SPÓŁKA AKCYJNA</div>
<div class="t" style="left:625px;top:58.69px;font-size:11px;color:#222;font-weight:normal;;letter-spacing:-0.093px;word-spacing:0.000px">522-000-37-82</div>
<div class="t" style="left:715px;top:58.69px;font-size:11px;color:#222;font-weight:normal;;letter-spacing:-0.330px;word-spacing:0.000px">01-O-019-C</div>
<div class="t" style="left:797px;top:58.69px;font-size:11px;color:#222;font-weight:normal;;letter-spacing:-0.330px;word-spacing:0.000px">01-O-019-C</div>
<div class="t" style="left:932px;top:58.69px;font-size:11px;color:#222;font-weight:normal;;letter-spacing:-0.007px;word-spacing:-0.322px">ul. Olchowa 14</div>
<div style="position:absolute;left:895px;top:60px;width:12px;height:12px;box-sizing:border-box;border:1px solid #b8b8b8;background:#fff"></div>
<svg style="position:absolute;left:885px;top:55px" width="30" height="20" viewBox="0 0 30 20"><path d="M12.3 9.4 L16.4 13 L23.6 5.2" fill="none" stroke="#fff" stroke-width="4"/><path d="M12.3 9.4 L16.4 13 L23.6 5.2" fill="none" stroke="#1a9fe2" stroke-width="2.7"/></svg>
<div style="position:absolute;left:0px;top:75px;width:1103px;height:20px;background:#fff"></div>
<div style="position:absolute;left:49px;top:75px;width:100px;height:20px;background:#fdfde8"></div>
<div style="position:absolute;left:0px;top:75px;width:1103px;height:1px;background:#dce3e9"></div>
<div style="position:absolute;left:26px;top:75px;width:1px;height:20px;background:#d3e3f2"></div>
<div style="position:absolute;left:48px;top:75px;width:1px;height:20px;background:#dde6ee"></div>
<div style="position:absolute;left:7px;top:80px;width:12px;height:12px;box-sizing:border-box;border:1px solid #b0b0b0;background:#fff"></div>
<div class="t" style="left:53px;top:78.69px;font-size:11px;color:#222;font-weight:normal;;letter-spacing:-0.330px;word-spacing:0.000px">01-O-020-C</div>
<div class="t" style="left:153px;top:78.69px;font-size:11px;color:#222;font-weight:normal;;letter-spacing:-0.027px;word-spacing:-0.302px">Odbiorca 20</div>
<div class="t" style="left:325px;top:78.69px;font-size:11px;color:#222;font-weight:normal;;letter-spacing:0.086px;word-spacing:0.000px">dolnośląskie</div>
<div class="t" style="left:625px;top:78.69px;font-size:11px;color:#222;font-weight:normal;;letter-spacing:-0.030px;word-spacing:0.000px">020-01-01-119</div>
<div class="t" style="left:715px;top:78.69px;font-size:11px;color:#222;font-weight:normal;;letter-spacing:-0.330px;word-spacing:0.000px">01-O-020-C</div>
<div class="t" style="left:797px;top:78.69px;font-size:11px;color:#222;font-weight:normal;;letter-spacing:-0.330px;word-spacing:0.000px">01-O-020-C</div>
<div class="t" style="left:932px;top:78.69px;font-size:11px;color:#222;font-weight:normal;;letter-spacing:-0.033px;word-spacing:-0.295px">ul. Ostrężynowa 15</div>
<div style="position:absolute;left:895px;top:80px;width:12px;height:12px;box-sizing:border-box;border:1px solid #b8b8b8;background:#fff"></div>
<svg style="position:absolute;left:885px;top:75px" width="30" height="20" viewBox="0 0 30 20"><path d="M12.3 9.4 L16.4 13 L23.6 5.2" fill="none" stroke="#fff" stroke-width="4"/><path d="M12.3 9.4 L16.4 13 L23.6 5.2" fill="none" stroke="#1a9fe2" stroke-width="2.7"/></svg>
<div style="position:absolute;left:49px;top:35.80000000000001px;width:100px;height:19.2px;box-sizing:border-box;border:2.5px solid #0f79c0"></div>
<div style="position:absolute;left:0px;top:75.60000000000002px;width:1103px;height:1.2px;background:#5f5f5f"></div>
<div style="position:absolute;left:149px;top:75px;width:1.5px;height:20px;background:#555"></div>
<div style="position:absolute;left:319px;top:75px;width:1.5px;height:20px;background:#555"></div>
</div>
<div style="position:absolute;left:1103px;top:187px;width:15px;height:95px;background:#fff;box-sizing:border-box;border-left:1px solid #e4e4e4"></div>
<svg style="position:absolute;left:1107px;top:194px" width="8" height="5" viewBox="0 0 8 5"><polyline points="1,4.5 4,1 7,4.5" fill="none" stroke="#bdbdbd" stroke-width="1"/></svg>
<div style="position:absolute;left:1107px;top:201px;width:7px;height:8px;background:#c4c4c4"></div>
<svg style="position:absolute;left:1107px;top:272px" width="8" height="5" viewBox="0 0 8 5"><polyline points="1,1 4,4.5 7,1" fill="none" stroke="#bdbdbd" stroke-width="1"/></svg>
<div style="position:absolute;left:0px;top:281px;width:1103px;height:12px;background:#fff"></div>
<div style="position:absolute;left:0px;top:281px;width:1103px;height:1px;background:#bdbdbd"></div>
<div style="position:absolute;left:1103px;top:187px;width:1px;height:94px;background:#c8c8c8"></div>
<svg style="position:absolute;left:4px;top:284px" width="5" height="8" viewBox="0 0 5 8"><polyline points="4.5,1 1,4 4.5,7" fill="none" stroke="#bdbdbd" stroke-width="1"/></svg>
<div style="position:absolute;left:13px;top:285px;width:867px;height:7px;background:#bbbbbb"></div>
<svg style="position:absolute;left:1094px;top:284px" width="5" height="8" viewBox="0 0 5 8"><polyline points="1,1 4.5,4 1,7" fill="none" stroke="#bdbdbd" stroke-width="1"/></svg>
<div style="position:absolute;left:1117px;top:156px;width:1px;height:137px;background:#cfcfcf"></div>
<div style="position:absolute;left:0px;top:295px;width:1118px;height:4px;background:#bbbbbb"></div>
<div style="position:absolute;left:553px;top:297px;width:3px;height:1.2px;background:#fff"></div>
<div style="position:absolute;left:557px;top:297px;width:3px;height:1.2px;background:#fff"></div>
<div style="position:absolute;left:561px;top:297px;width:3px;height:1.2px;background:#fff"></div>
<div style="position:absolute;left:0px;top:329px;width:1118px;height:1px;background:#dadada"></div>
<div style="position:absolute;left:0px;top:359px;width:1118px;height:1px;background:#cfcfcf"></div>
<svg style="position:absolute;left:5px;top:306px" width="13" height="15" viewBox="0 0 13 15"><rect x="0.5" y="0.5" width="11" height="14" rx="0.5" fill="none" stroke="#707070" stroke-width="1"/></svg>
<svg style="position:absolute;left:9.0px;top:311.0px" width="12.799999999999999" height="12.799999999999999" viewBox="0 0 12.799999999999999 12.799999999999999"><circle cx="6.3999999999999995" cy="6.3999999999999995" r="5.5" fill="#fff"/><circle cx="6.3999999999999995" cy="6.3999999999999995" r="4.6" fill="#d04a2a"/><path d="M4.6 4.6 L8.2 8.2 M8.2 4.6 L4.6 8.2" stroke="#fff" stroke-width="1.2"/></svg>
<svg style="position:absolute;left:30px;top:306px" width="17" height="16" viewBox="0 0 17 16"><rect x="4" y="0.8" width="9" height="5" rx="2" fill="none" stroke="#777" stroke-width="1.2"/><rect x="0.5" y="4.5" width="16" height="7" rx="1.5" fill="#6e6e6e"/><rect x="3" y="3.5" width="11" height="3.2" fill="#3b78c2"/><rect x="4" y="9" width="9" height="6.5" fill="#fff" stroke="#777" stroke-width="1"/><rect x="6" y="12" width="5" height="1.2" fill="#8fb0d8"/></svg>
<svg style="position:absolute;left:53px;top:311.0px" width="8" height="5.5" viewBox="0 0 8 5.5"><polyline points="1,1 4.0,4.5 7,1" fill="none" stroke="#2e5f91" stroke-width="1.15"/></svg>
<svg style="position:absolute;left:74px;top:306px" width="13" height="15" viewBox="0 0 13 15"><rect x="0.5" y="0.5" width="11" height="14" rx="0.5" fill="none" stroke="#707070" stroke-width="1"/></svg>
<svg style="position:absolute;left:78.3px;top:311.09999999999997px" width="12.6" height="12.6" viewBox="0 0 12.6 12.6"><g transform="translate(6.3,6.3)"><circle r="5.5" fill="#fff"/><rect x="-1.1" y="-4.9" width="2.2" height="9.8" transform="rotate(0)" fill="#6f6f6f"/><rect x="-1.1" y="-4.9" width="2.2" height="9.8" transform="rotate(45)" fill="#6f6f6f"/><rect x="-1.1" y="-4.9" width="2.2" height="9.8" transform="rotate(90)" fill="#6f6f6f"/><rect x="-1.1" y="-4.9" width="2.2" height="9.8" transform="rotate(135)" fill="#6f6f6f"/><circle r="3.3" fill="#6f6f6f"/><circle r="1.386" fill="#fff"/></g></svg>
<div class="t" style="left:93px;top:307.49px;font-size:11px;color:#222;font-weight:normal;;letter-spacing:-0.047px;word-spacing:0.000px">Procedury</div>
<svg style="position:absolute;left:146px;top:311.0px" width="8" height="5.5" viewBox="0 0 8 5.5"><polyline points="1,1 4.0,4.5 7,1" fill="none" stroke="#2e5f91" stroke-width="1.15"/></svg>
<svg style="position:absolute;left:879px;top:306px" width="17" height="16" viewBox="0 0 17 16"><rect x="0" y="0" width="1.2" height="15.6" fill="#6b6b6b"/><rect x="0" y="14.6" width="16" height="1.2" fill="#6b6b6b"/><rect x="1.6" y="7" width="3.9" height="7.6" fill="#62b36b"/><rect x="6.7" y="1" width="3.9" height="13.6" fill="#ffc107"/><rect x="11.7" y="4" width="3.9" height="10.6" fill="#7b57c4"/></svg>
<svg style="position:absolute;left:899.5px;top:310.3px" width="8" height="5.5" viewBox="0 0 8 5.5"><polyline points="1,1 4.0,4.5 7,1" fill="none" stroke="#2e5f91" stroke-width="1.15"/></svg>
<svg style="position:absolute;left:918px;top:306px" width="17" height="17" viewBox="0 0 17 17"><rect x="0.5" y="0.5" width="14" height="13" fill="#fff" stroke="#555" stroke-width="1"/><rect x="0.5" y="0.5" width="14" height="2.2" fill="#2a68b0"/></svg>
<svg style="position:absolute;left:922.7px;top:313.2px" width="12.6" height="12.6" viewBox="0 0 12.6 12.6"><circle cx="7.3" cy="4.3" r="3.3" fill="#fff" stroke="#2f6fba" stroke-width="1.4"/><line x1="4.99" y1="6.609999999999999" x2="1" y2="10.6" stroke="#2f6fba" stroke-width="1.8"/></svg>
<div class="t" style="left:937px;top:307.49px;font-size:11px;color:#222;font-weight:normal;;letter-spacing:-0.002px;word-spacing:0.000px">Podgląd</div>
<svg style="position:absolute;left:987px;top:306px" width="17" height="16" viewBox="0 0 17 16"><path d="M0.5 0.5 H13 L8.2 6.5 V13 L5.3 11 V6.5 Z" fill="#7a7a7a"/><circle cx="12" cy="11" r="4.2" fill="#4aa36c" stroke="#fff" stroke-width="0.8"/><path d="M9.8 11 L11.4 12.6 L14.2 9.6" fill="none" stroke="#fff" stroke-width="1.3"/></svg>
<div class="t" style="left:1006px;top:307.49px;font-size:11px;color:#222;font-weight:normal;;letter-spacing:0.080px;word-spacing:0.000px">Filtruj</div>
<svg style="position:absolute;left:1044px;top:306px" width="15" height="15" viewBox="0 0 15 15"><rect x="0.5" y="0.5" width="14" height="14" fill="#fff" stroke="#666" stroke-width="1"/><rect x="1" y="3" width="4" height="11.5" fill="#cfe3f5"/><line x1="5" y1="3" x2="5" y2="14.5" stroke="#8aa" stroke-width="0.6"/><line x1="6.5" y1="6.5" x2="13" y2="6.5" stroke="#bbb" stroke-width="0.7"/><rect x="0" y="0" width="15" height="2.8" fill="#2a68b0"/></svg>
<svg style="position:absolute;left:1049.8px;top:311.8px" width="12.4" height="12.4" viewBox="0 0 12.4 12.4"><g transform="translate(6.2,6.2)"><rect x="-1.1" y="-4.800000000000001" width="2.2" height="9.600000000000001" transform="rotate(0)" fill="#6f6f6f"/><rect x="-1.1" y="-4.800000000000001" width="2.2" height="9.600000000000001" transform="rotate(45)" fill="#6f6f6f"/><rect x="-1.1" y="-4.800000000000001" width="2.2" height="9.600000000000001" transform="rotate(90)" fill="#6f6f6f"/><rect x="-1.1" y="-4.800000000000001" width="2.2" height="9.600000000000001" transform="rotate(135)" fill="#6f6f6f"/><circle r="3.2" fill="#6f6f6f"/><circle r="1.344" fill="#fff"/></g></svg>
<svg style="position:absolute;left:1064.5px;top:311.0px" width="8" height="5.5" viewBox="0 0 8 5.5"><polyline points="1,1 4.0,4.5 7,1" fill="none" stroke="#2e5f91" stroke-width="1.15"/></svg>
<svg style="position:absolute;left:1083.5px;top:306px" width="17" height="17" viewBox="0 0 17 17"><circle cx="8.5" cy="8.5" r="8" fill="#2a68b0"/><text x="8.5" y="13.2" text-anchor="middle" font-family="Liberation Sans" font-weight="bold" font-size="13" fill="#fff">?</text></svg>
<svg style="position:absolute;left:1104.5px;top:311.0px" width="8" height="5.5" viewBox="0 0 8 5.5"><polyline points="1,1 4.0,4.5 7,1" fill="none" stroke="#2e5f91" stroke-width="1.15"/></svg>
<svg style="position:absolute;left:4px;top:336px" width="13" height="15" viewBox="0 0 13 15"><rect x="0.5" y="0.5" width="11" height="14" rx="0.5" fill="none" stroke="#707070" stroke-width="1"/></svg>
<svg style="position:absolute;left:3.8000000000000007px;top:336.9px" width="11.0" height="11.0" viewBox="0 0 11.0 11.0"><g transform="translate(5.5,5.5)"><rect x="-1.1" y="-4.1" width="2.2" height="8.2" transform="rotate(0)" fill="#6f6f6f"/><rect x="-1.1" y="-4.1" width="2.2" height="8.2" transform="rotate(45)" fill="#6f6f6f"/><rect x="-1.1" y="-4.1" width="2.2" height="8.2" transform="rotate(90)" fill="#6f6f6f"/><rect x="-1.1" y="-4.1" width="2.2" height="8.2" transform="rotate(135)" fill="#6f6f6f"/><circle r="2.5" fill="#6f6f6f"/><circle r="1.05" fill="#fff"/></g></svg>
<svg style="position:absolute;left:8.299999999999999px;top:340.70000000000005px" width="12.8" height="12.8" viewBox="0 0 12.8 12.8"><g transform="translate(6.4,6.4)"><circle r="5.6" fill="#fff"/><rect x="-1.1" y="-5.0" width="2.2" height="10.0" transform="rotate(0)" fill="#4aa36c"/><rect x="-1.1" y="-5.0" width="2.2" height="10.0" transform="rotate(45)" fill="#4aa36c"/><rect x="-1.1" y="-5.0" width="2.2" height="10.0" transform="rotate(90)" fill="#4aa36c"/><rect x="-1.1" y="-5.0" width="2.2" height="10.0" transform="rotate(135)" fill="#4aa36c"/><circle r="3.4" fill="#4aa36c"/><circle r="1.428" fill="#fff"/></g></svg>
<div class="t" style="left:23.6px;top:336.69px;font-size:11px;color:#222;font-weight:normal;;letter-spacing:-0.241px;word-spacing:-0.087px">Pobierz dane GUS</div>
<svg style="position:absolute;left:121px;top:336px" width="13" height="15" viewBox="0 0 13 15"><rect x="0.5" y="0.5" width="11" height="14" rx="0.5" fill="none" stroke="#707070" stroke-width="1"/></svg>
<svg style="position:absolute;left:120.8px;top:336.9px" width="11.0" height="11.0" viewBox="0 0 11.0 11.0"><g transform="translate(5.5,5.5)"><rect x="-1.1" y="-4.1" width="2.2" height="8.2" transform="rotate(0)" fill="#6f6f6f"/><rect x="-1.1" y="-4.1" width="2.2" height="8.2" transform="rotate(45)" fill="#6f6f6f"/><rect x="-1.1" y="-4.1" width="2.2" height="8.2" transform="rotate(90)" fill="#6f6f6f"/><rect x="-1.1" y="-4.1" width="2.2" height="8.2" transform="rotate(135)" fill="#6f6f6f"/><circle r="2.5" fill="#6f6f6f"/><circle r="1.05" fill="#fff"/></g></svg>
<svg style="position:absolute;left:125.29999999999998px;top:340.70000000000005px" width="12.8" height="12.8" viewBox="0 0 12.8 12.8"><g transform="translate(6.4,6.4)"><circle r="5.6" fill="#fff"/><rect x="-1.1" y="-5.0" width="2.2" height="10.0" transform="rotate(0)" fill="#4aa36c"/><rect x="-1.1" y="-5.0" width="2.2" height="10.0" transform="rotate(45)" fill="#4aa36c"/><rect x="-1.1" y="-5.0" width="2.2" height="10.0" transform="rotate(90)" fill="#4aa36c"/><rect x="-1.1" y="-5.0" width="2.2" height="10.0" transform="rotate(135)" fill="#4aa36c"/><circle r="3.4" fill="#4aa36c"/><circle r="1.428" fill="#fff"/></g></svg>
<div class="t" style="left:139.5px;top:336.69px;font-size:11px;color:#222;font-weight:normal;;letter-spacing:-0.021px;word-spacing:-0.307px">Przepisz dane na kontrahenta</div>
<div style="position:absolute;left:1074.3px;top:350px;width:24.3px;height:9.5px;box-sizing:border-box;border:1px solid #c2c2c2;border-bottom:none;background:#f4f4f4;border-radius:2px 2px 0 0"></div>
<svg style="position:absolute;left:1082px;top:352.8px" width="10" height="5" viewBox="0 0 10 5"><polyline points="1,1 5,4.5 9,1" fill="none" stroke="#2e5f91" stroke-width="1.3"/></svg>
<div style="position:absolute;left:2.5px;top:363.5px;width:109px;height:22px;box-sizing:border-box;border:2px solid #1a7fc1;border-bottom:none;border-radius:3px 3px 0 0;background:#fff"></div>
<div class="t" style="left:2.5px;top:366.00px;width:109px;text-align:center;color:#0b74b9;font-size:11px;-webkit-text-stroke:0.35px #0b74b9;letter-spacing:-0.011px;text-indent:0.011px">Dane podstawowe</div>
<div style="position:absolute;left:114.5px;top:363.5px;width:104px;height:21px;box-sizing:border-box;border:1px solid #cdcdcd;border-bottom:none;border-radius:3px 3px 0 0;background:#fff"></div>
<div class="t" style="left:114.5px;top:366.00px;width:104px;text-align:center;color:#444;font-size:11px;letter-spacing:-0.018px;text-indent:0.018px">Dane kontaktowe</div>
<div style="position:absolute;left:221px;top:363.5px;width:94.5px;height:21px;box-sizing:border-box;border:1px solid #cdcdcd;border-bottom:none;border-radius:3px 3px 0 0;background:#fff"></div>
<div class="t" style="left:221px;top:366.00px;width:94.5px;text-align:center;color:#444;font-size:11px;letter-spacing:-0.120px;text-indent:0.120px">Dane adresowe</div>
<div style="position:absolute;left:318.5px;top:363.5px;width:190px;height:21px;box-sizing:border-box;border:1px solid #cdcdcd;border-bottom:none;border-radius:3px 3px 0 0;background:#fff"></div>
<div class="t" style="left:318.5px;top:366.00px;width:190px;text-align:center;color:#444;font-size:11px;letter-spacing:-0.043px;text-indent:0.043px">Dane adresowe do korespondencji</div>
<div style="position:absolute;left:0px;top:384px;width:1118px;height:1px;background:#d6d6d6"></div>
<div style="position:absolute;left:0px;top:385px;width:1103px;height:30px;background:#f0f0f0"></div>
<div style="position:absolute;left:27px;top:400px;width:966px;height:15px;background:#ebebeb"></div>
<div style="position:absolute;left:0px;top:415px;width:1103px;height:2px;background:#bdbdbd"></div>
<div style="position:absolute;left:27px;top:385px;width:1px;height:30px;background:#d4d4d4"></div>
<div style="position:absolute;left:95px;top:385px;width:1px;height:30px;background:#d4d4d4"></div>
<div style="position:absolute;left:285px;top:385px;width:1px;height:30px;background:#d4d4d4"></div>
<div style="position:absolute;left:460px;top:385px;width:1px;height:30px;background:#d4d4d4"></div>
<div style="position:absolute;left:537px;top:385px;width:1px;height:30px;background:#d4d4d4"></div>
<div style="position:absolute;left:645px;top:385px;width:1px;height:30px;background:#d4d4d4"></div>
<div style="position:absolute;left:993px;top:385px;width:1px;height:30px;background:#d4d4d4"></div>
<div style="position:absolute;left:1085px;top:385px;width:1px;height:30px;background:#d4d4d4"></div>
<div style="position:absolute;left:27px;top:400px;width:433px;height:1px;background:#d9d9d9"></div>
<div style="position:absolute;left:645px;top:400px;width:348px;height:1px;background:#d9d9d9"></div>
<div style="position:absolute;left:144px;top:400px;width:1px;height:15px;background:#d4d4d4"></div>
<div style="position:absolute;left:382px;top:400px;width:1px;height:15px;background:#d4d4d4"></div>
<div style="position:absolute;left:737px;top:400px;width:1px;height:15px;background:#d4d4d4"></div>
<div style="position:absolute;left:1103px;top:385px;width:15px;height:32px;background:#f4f4f4;box-sizing:border-box;border-left:1px solid #d4d4d4"></div>
<svg style="position:absolute;left:1106px;top:394px" width="8" height="12" viewBox="0 0 8 12"><polyline points="6.5,1 1.5,6 6.5,11" fill="none" stroke="#2a68b0" stroke-width="1.3"/></svg>
<div style="position:absolute;left:7px;top:401px;width:12px;height:12px;box-sizing:border-box;border:1px solid #aaa;background:#fff"></div>
<div class="t" style="left:31px;top:384.69px;font-size:11px;color:#333;font-weight:bold;;letter-spacing:-0.398px;word-spacing:0.000px">Kontrahent</div>
<div class="t" style="left:31px;top:400.69px;font-size:11px;color:#333;font-weight:bold;;letter-spacing:-0.559px;word-spacing:0.000px">Logo</div>
<div class="t" style="left:99px;top:384.69px;font-size:11px;color:#333;font-weight:bold;;letter-spacing:-0.280px;word-spacing:0.000px">Działalność</div>
<div class="t" style="left:99px;top:400.69px;font-size:11px;color:#333;font-weight:bold;;letter-spacing:-0.708px;word-spacing:0.000px">Kod</div>
<div class="t" style="left:149px;top:400.69px;font-size:11px;color:#333;font-weight:bold;;letter-spacing:-0.535px;word-spacing:0.000px">Opis</div>
<div class="t" style="left:289px;top:384.69px;font-size:11px;color:#333;font-weight:bold;;letter-spacing:-0.284px;word-spacing:-0.044px">Data importu</div>
<div class="t" style="left:289px;top:400.69px;font-size:11px;color:#333;font-weight:bold;;letter-spacing:-0.776px;word-spacing:0.000px">GUS</div>
<div class="t" style="left:387px;top:400.69px;font-size:11px;color:#333;font-weight:bold;;letter-spacing:-0.766px;word-spacing:0.000px">ERP</div>
<div class="t" style="left:465px;top:384.69px;font-size:11px;color:#333;font-weight:bold;;letter-spacing:-0.089px;word-spacing:0.000px">NIP</div>
<div class="t" style="left:542px;top:384.69px;font-size:11px;color:#333;font-weight:bold;;letter-spacing:-0.516px;word-spacing:0.000px">Regon</div>
<div class="t" style="left:650px;top:384.69px;font-size:11px;color:#333;font-weight:bold;;letter-spacing:-0.206px;word-spacing:0.000px">Nazwa</div>
<div class="t" style="left:650px;top:400.69px;font-size:11px;color:#333;font-weight:bold;;letter-spacing:-0.432px;word-spacing:0.000px">Skrócona</div>
<div class="t" style="left:742px;top:400.69px;font-size:11px;color:#1a7fc1;font-weight:bold;;letter-spacing:-0.194px;word-spacing:0.000px">Pełna</div>
<div class="t" style="left:997px;top:384.69px;font-size:11px;color:#333;font-weight:bold;;letter-spacing:-0.300px;word-spacing:-0.028px">Data rozpoczęcia</div>
<div class="t" style="left:997px;top:400.69px;font-size:11px;color:#333;font-weight:bold;;letter-spacing:-0.249px;word-spacing:0.000px">działalności</div>
<div style="position:absolute;left:0px;top:417px;width:1118px;height:20px;background:#fff"></div>
<div style="position:absolute;left:538px;top:417px;width:107px;height:20px;background:#f0a0a0"></div>
<div style="position:absolute;left:738px;top:417px;width:255px;height:20px;background:#f0a0a0"></div>
<div style="position:absolute;left:994px;top:417px;width:91px;height:20px;background:#f0a0a0"></div>
<div style="position:absolute;left:0px;top:417px;width:1118px;height:2px;background:#0f79c0"></div>
<div style="position:absolute;left:0px;top:435px;width:1118px;height:2px;background:#0f79c0"></div>
<div style="position:absolute;left:738px;top:417px;width:255px;height:20px;box-sizing:border-box;border:3px solid #0f79c0"></div>
<div style="position:absolute;left:26px;top:419px;width:1px;height:16px;background:#d3e3f2"></div>
<div style="position:absolute;left:7px;top:421px;width:12px;height:12px;box-sizing:border-box;border:1px solid #b0b0b0;background:#fff"></div>
<div class="t" style="left:31px;top:420.19px;font-size:11px;color:#222;font-weight:normal;;letter-spacing:-0.330px;word-spacing:0.000px">01-O-018-C</div>
<div class="t" style="left:99px;top:420.19px;font-size:11px;color:#222;font-weight:normal;;letter-spacing:-0.703px;word-spacing:0.000px">OP</div>
<div class="t" style="left:149px;top:420.19px;font-size:11px;color:#222;font-weight:normal;;letter-spacing:-0.078px;word-spacing:-0.250px">Osoba prawna</div>
<div class="t" style="left:289px;top:420.19px;font-size:11px;color:#222;font-weight:normal;;letter-spacing:-0.003px;word-spacing:-0.325px">2017-09-11 12:41</div>
<div class="t" style="left:465px;top:420.19px;font-size:11px;color:#222;font-weight:normal;;letter-spacing:0.062px;word-spacing:0.000px">5222612717</div>
<div class="t" style="left:542px;top:420.19px;font-size:11px;color:#222;font-weight:normal;;letter-spacing:0.062px;word-spacing:0.000px">017293003</div>
<div style="position:absolute;left:742px;top:420px;width:248px;height:14px;overflow:hidden">
<div class="t" style="left:0px;top:0.19px;font-size:11px;color:#222;font-weight:normal;;letter-spacing:-0.532px;word-spacing:0.204px">ASSECO BUSINESS SOLUTIONS SPÓŁKA AKCYJNA</div>
</div>
<div class="t" style="left:997px;top:420.19px;font-size:11px;color:#222;font-weight:normal;;letter-spacing:-0.072px;word-spacing:0.000px">2001-05-18</div>
<div style="position:absolute;left:0px;top:437px;width:1103px;height:19px;background:#f2f2f2"></div>
<div style="position:absolute;left:1085px;top:437px;width:33px;height:19px;background:#e9f0f5"></div>
<div style="position:absolute;left:0px;top:437px;width:26px;height:19px;background:#e9f0f5"></div>
<div style="position:absolute;left:0px;top:456px;width:1118px;height:1px;background:#dcdcdc"></div>
<div style="position:absolute;left:26px;top:437px;width:1px;height:19px;background:#d3e3f2"></div>
<div style="position:absolute;left:7px;top:441px;width:12px;height:12px;box-sizing:border-box;border:1px solid #b0b0b0;background:#fff"></div>
<div class="t" style="left:31px;top:440.19px;font-size:11px;color:#222;font-weight:normal;;letter-spacing:-0.330px;word-spacing:0.000px">01-O-018-C</div>
<div class="t" style="left:99px;top:440.19px;font-size:11px;color:#222;font-weight:normal;;letter-spacing:-0.885px;word-spacing:0.000px">ERP</div>
<div class="t" style="left:149px;top:440.19px;font-size:11px;color:#222;font-weight:normal;;letter-spacing:-0.350px;word-spacing:0.022px">Rekord w ERP</div>
<div style="position:absolute;left:465px;top:437px;width:71px;height:19px;overflow:hidden">
<div class="t" style="left:0px;top:3.19px;font-size:11px;color:#222;font-weight:normal;;letter-spacing:-0.093px;word-spacing:0.000px">522-261-27-17</div>
</div>
<div class="t" style="left:650px;top:440.19px;font-size:11px;color:#222;font-weight:normal;;letter-spacing:-0.027px;word-spacing:-0.302px">Odbiorca 18</div>
<div class="t" style="left:742px;top:440.19px;font-size:11px;color:#222;font-weight:normal;;letter-spacing:0.086px;word-spacing:0.000px">dolnośląskie</div>
<div style="position:absolute;left:1117px;top:385px;width:1px;height:97px;background:#cfcfcf"></div>
<div style="position:absolute;left:0px;top:457px;width:1118px;height:25px;background:#fff"></div>
<div style="position:absolute;left:1117px;top:457px;width:1px;height:25px;background:#cfcfcf"></div>
<div style="position:absolute;left:0px;top:482px;width:1118px;height:30px;background:#e8e8e8"></div>
<div style="position:absolute;left:0px;top:482px;width:1118px;height:1px;background:#d8d8d8"></div>
<svg style="position:absolute;left:4px;top:488px" width="17" height="18" viewBox="0 0 17 18"><rect x="1.2" y="3.5" width="1.3" height="13" fill="#2a68b0"/><rect x="1.2" y="12.7" width="5.5" height="3.8" fill="#2a68b0"/><rect x="1.2" y="12.2" width="14" height="0.7" fill="#7a9cc4"/><rect x="8.2" y="14" width="2.4" height="2.5" fill="#b5b5b5"/><rect x="12" y="14" width="2.8" height="2.5" fill="#b5b5b5"/><circle cx="10" cy="5.7" r="3.3" fill="none" stroke="#2a68b0" stroke-width="1.4"/><line x1="12.3" y1="8" x2="14.6" y2="10.3" stroke="#2a68b0" stroke-width="1.6"/></svg>
<div class="t" style="left:25.6px;top:490.19px;font-size:11px;color:#222;font-weight:normal;;letter-spacing:-0.085px;word-spacing:-0.243px">Dane powiązane</div>
<svg style="position:absolute;left:109.5px;top:493.7px" width="9" height="6.2" viewBox="0 0 9 6.2"><polyline points="1,1 4.5,5.2 8,1" fill="none" stroke="#222" stroke-width="1.3"/></svg>
<div style="position:absolute;left:128.6px;top:482.5px;width:50.5px;height:22px;box-sizing:border-box;border:1px solid #d2d2d2;border-radius:2px;background:#fff"></div>
<div class="t" style="left:128.6px;top:487.00px;width:50.5px;text-align:center;color:#444;font-size:11px;letter-spacing:-0.091px">Adresy</div>
<div style="position:absolute;left:181.8px;top:482.5px;width:108.4px;height:22px;box-sizing:border-box;border:1px solid #d2d2d2;border-radius:2px;background:#fff"></div>
<div class="t" style="left:181.8px;top:487.00px;width:108.4px;text-align:center;color:#444;font-size:11px;letter-spacing:-0.068px">Rachunki bankowe</div>
<div style="position:absolute;left:293.6px;top:482.5px;width:69.4px;height:22px;box-sizing:border-box;border:1px solid #d2d2d2;border-radius:2px;background:#fff"></div>
<div class="t" style="left:293.6px;top:487.00px;width:69.4px;text-align:center;color:#444;font-size:11px;letter-spacing:-0.370px">NIP-y w UE</div>
<div style="position:absolute;left:366.4px;top:482.5px;width:148.4px;height:22px;box-sizing:border-box;border:1px solid #d2d2d2;border-radius:2px;background:#fff"></div>
<div class="t" style="left:366.4px;top:487.00px;width:148.4px;text-align:center;color:#444;font-size:11px;letter-spacing:0.107px">Odbiorcy/dostawcy płatnika</div>
<div style="position:absolute;left:522.9px;top:482px;width:66.6px;height:22.5px;box-sizing:border-box;border:1px solid #1a7fc1;border-top:none;border-bottom:2px solid #1a7fc1;border-radius:0 0 3px 3px;background:#fff"></div>
<div class="t" style="left:522.9px;top:487.00px;width:66.6px;text-align:center;color:#1a7fc1;font-weight:bold;font-size:11px;letter-spacing:-0.551px">Dane GUS</div>
<div style="position:absolute;left:519.3px;top:479px;width:73.4px;height:30px;box-sizing:border-box;border:3px solid #e51b24;border-radius:7px"></div>
</body></html>
